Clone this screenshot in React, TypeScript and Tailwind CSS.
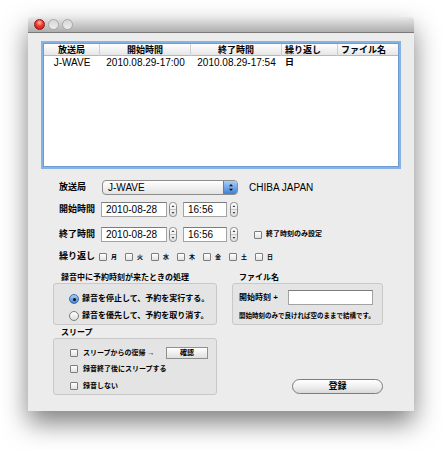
import React from "react";

const Stepper = () => (
  <svg width="8" height="15" viewBox="0 0 8 15" className="shrink-0">
    <defs>
      <linearGradient id="stg" x1="0" y1="0" x2="0" y2="1">
        <stop offset="0" stopColor="#ffffff" />
        <stop offset="1" stopColor="#dedede" />
      </linearGradient>
    </defs>
    <rect x="0.5" y="0.5" width="7" height="14" rx="3" fill="url(#stg)" stroke="#8a8a8a" />
    <line x1="1" y1="7.5" x2="7" y2="7.5" stroke="#c4c4c4" />
    <path d="M2.6 5 L4 3.2 L5.4 5 Z" fill="#3a3a3a" />
    <path d="M2.6 10 L4 11.8 L5.4 10 Z" fill="#3a3a3a" />
  </svg>
);

const Check = () => (
  <div className="w-[8px] h-[8px] shrink-0 border border-[#7d7d7d] rounded-[1px] bg-linear-to-b from-white to-[#e2e2e2]" />
);

const Radio = ({ on }: { on?: boolean }) =>
  on ? (
    <div className="w-[10px] h-[10px] shrink-0 rounded-full border border-[#3f6ea8] bg-linear-to-b from-[#a9cdf5] to-[#3d83d6] flex items-center justify-center">
      <div className="w-[3px] h-[3px] rounded-full bg-[#111]" />
    </div>
  ) : (
    <div className="w-[10px] h-[10px] shrink-0 rounded-full border border-[#7d7d7d] bg-linear-to-b from-white to-[#dcdcdc]" />
  );

const Field = ({ w, text }: { w: string; text?: string }) => (
  <div className={`${w} h-[15px] shrink-0 bg-white border border-[#a3a3a3] border-t-[#7c7c7c] flex items-center pl-[4px] text-[10px] text-black`}>
    {text}
  </div>
);

export default function App() {
  const days = ["月", "火", "水", "木", "金", "土", "日"];
  return (
    <div className="w-[442px] h-[450px] bg-white overflow-hidden font-['Liberation_Sans','Noto_Sans_CJK_JP',sans-serif] text-black">
      <div className="ml-[28px] mt-[17px] w-[386px] h-[394px] bg-[#ececec] rounded-t-[4px] shadow-[0_12px_26px_rgba(0,0,0,0.5)] flex flex-col">
        {/* title bar */}
        <div className="h-[16px] shrink-0 rounded-t-[4px] bg-linear-to-b from-[#e9e9e9] to-[#aeaeae] border-b border-[#7a7a7a] flex items-center pl-[6px] gap-[3px]">
          <div className="w-[11px] h-[11px] rounded-full border border-[#8a1b14] bg-[radial-gradient(circle_at_50%_30%,#ffb3a8_0%,#f2392b_45%,#b01a10_100%)]" />
          <div className="w-[11px] h-[11px] rounded-full border border-[#a8a8a8] bg-linear-to-b from-[#d6d6d6] to-[#ededed]" />
          <div className="w-[11px] h-[11px] rounded-full border border-[#a8a8a8] bg-linear-to-b from-[#d6d6d6] to-[#ededed]" />
        </div>

        <div className="flex-1 px-[13px] pt-[8px] flex flex-col">
          {/* table */}
          <div className="w-[360px] h-[128px] shrink-0 border-2 border-[#86b3e6] bg-white shadow-[inset_0_0_0_1px_#6f9bcf] p-[1px] flex flex-col">
            <div className="h-[12px] grid grid-cols-[56px_91px_91px_56px_1fr] bg-linear-to-b from-white to-[#e6e6e6] border-b border-[#b8b8b8] text-[9px] font-bold leading-[12px]">
              <div className="text-center border-r border-[#cfcfcf]">放送局</div>
              <div className="text-center border-r border-[#cfcfcf]">開始時間</div>
              <div className="text-center border-r border-[#cfcfcf]">終了時間</div>
              <div className="pl-[3px] border-r border-[#cfcfcf]">繰り返し</div>
              <div className="pl-[3px]">ファイル名</div>
            </div>
            <div className="h-[13px] grid grid-cols-[56px_91px_91px_56px_1fr] text-[10px] leading-[13px]">
              <div className="text-center">J-WAVE</div>
              <div className="text-center">2010.08.29-17:00</div>
              <div className="text-center">2010.08.29-17:54</div>
              <div className="pl-[3px] text-[9px] font-bold">日</div>
              <div />
            </div>
          </div>

          {/* form rows */}
          <div className="pl-[18px] flex flex-col">
            <div className="mt-[11px] h-[15px] flex items-center">
              <div className="w-[43px] text-[9px] font-bold">放送局</div>
              <div className="w-[136px] h-[15px] rounded-[4px] border border-[#8c8c8c] bg-linear-to-b from-white to-[#e3e3e3] flex overflow-hidden">
                <div className="flex-1 pl-[5px] text-[10px] leading-[13px]">J-WAVE</div>
                <div className="w-[14px] h-full bg-linear-to-b from-[#a8cdf7] to-[#3b80d4] border-l border-[#5a7fae] flex items-center justify-center">
                  <svg width="6" height="9" viewBox="0 0 6 9">
                    <path d="M1 3.3 L3 1 L5 3.3 Z" fill="#111" />
                    <path d="M1 5.7 L3 8 L5 5.7 Z" fill="#111" />
                  </svg>
                </div>
              </div>
              <div className="ml-[11px] text-[10px]">CHIBA JAPAN</div>
            </div>

            <div className="mt-[7px] h-[15px] flex items-center">
              <div className="w-[42px] text-[9px] font-bold">開始時間</div>
              <Field w="w-[66px]" text="2010-08-28" />
              <div className="ml-[2px]"><Stepper /></div>
              <div className="ml-[6px]"><Field w="w-[44px]" text="16:56" /></div>
              <div className="ml-[3px]"><Stepper /></div>
            </div>

            <div className="mt-[10px] h-[15px] flex items-center">
              <div className="w-[42px] text-[9px] font-bold">終了時間</div>
              <Field w="w-[66px]" text="2010-08-28" />
              <div className="ml-[2px]"><Stepper /></div>
              <div className="ml-[6px]"><Field w="w-[44px]" text="16:56" /></div>
              <div className="ml-[3px]"><Stepper /></div>
              <div className="ml-[16px] flex items-center gap-[4px]">
                <Check />
                <span className="text-[7px] font-bold">終了時刻のみ設定</span>
              </div>
            </div>

            <div className="mt-[10px] h-[10px] flex items-center">
              <div className="w-[40px] text-[9px] font-bold">繰り返し</div>
              {days.map((d) => (
                <div key={d} className="w-[26px] flex items-center gap-[4px]">
                  <Check />
                  <span className="text-[6px] font-bold">{d}</span>
                </div>
              ))}
            </div>
          </div>

          {/* lower groups */}
          <div className="mt-[11px] pl-[12px] flex gap-[15px] flex-1 pb-[15px]">
            <div className="w-[164px] flex flex-col">
              <div className="h-[10px] pl-[8px] text-[8px] font-bold leading-[10px]">録音中に予約時刻が来たときの処理</div>
              <div className="h-[42px] rounded-[3px] border border-[#c8c8c8] bg-[#e4e4e4] pt-[10px] pl-[15px] flex flex-col gap-[7px]">
                <div className="h-[10px] flex items-center gap-[3px]">
                  <Radio on />
                  <span className="text-[8px] font-bold">録音を停止して、予約を実行する。</span>
                </div>
                <div className="h-[10px] flex items-center gap-[3px]">
                  <Radio />
                  <span className="text-[8px] font-bold">録音を優先して、予約を取り消す。</span>
                </div>
              </div>
              <div className="mt-[3px] h-[10px] pl-[8px] text-[8px] font-bold leading-[10px]">スリープ</div>
              <div className="h-[57px] rounded-[3px] border border-[#c8c8c8] bg-[#e4e4e4] pt-[8px] pl-[16px] flex flex-col">
                <div className="h-[12px] flex items-center">
                  <Check />
                  <span className="ml-[5px] w-[83px] text-[7px] font-bold">スリープからの復帰 →</span>
                  <div className="w-[42px] h-[12px] border border-[#8f8f8f] bg-linear-to-b from-white to-[#e0e0e0] text-[7px] font-bold flex items-center justify-center">確認</div>
                </div>
                <div className="mt-[5px] h-[10px] flex items-center">
                  <Check />
                  <span className="ml-[5px] text-[7px] font-bold">録音終了後にスリープする</span>
                </div>
                <div className="mt-[7px] h-[10px] flex items-center">
                  <Check />
                  <span className="ml-[5px] text-[7px] font-bold">録音しない</span>
                </div>
              </div>
            </div>

            <div className="w-[151px] flex flex-col">
              <div className="h-[10px] pl-[7px] text-[8px] font-bold leading-[10px]">ファイル名</div>
              <div className="h-[42px] rounded-[3px] border border-[#c8c8c8] bg-[#e4e4e4] pt-[6px] flex flex-col">
                <div className="h-[15px] flex items-center">
                  <div className="w-[55px] pl-[6px] text-[8px] font-bold">開始時刻 +</div>
                  <Field w="w-[85px]" />
                </div>
                <div className="mt-[6px] pl-[6px] text-[6.5px] font-bold leading-[9px]">開始時刻のみで良ければ空のままで結構です。</div>
              </div>
              <div className="flex-1" />
              <div className="mb-[2px] ml-[60px] w-[91px] h-[15px] rounded-full border border-[#7d7d7d] bg-linear-to-b from-white via-[#f0f0f0] to-[#d9d9d9] flex items-center justify-center text-[9px] font-bold">登録</div>
            </div>
          </div>
        </div>
      </div>
    </div>
  );
}
